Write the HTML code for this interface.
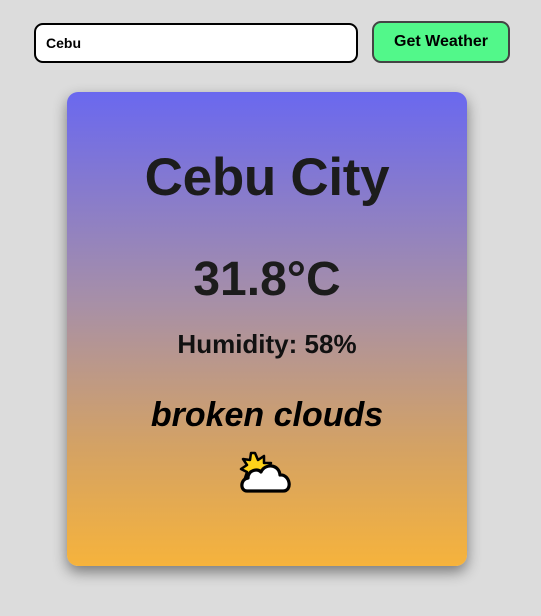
<!DOCTYPE html><html><head><style>
body{margin:0;background:#dcdcdc;width:541px;height:616px;position:relative;font-family:"Liberation Sans",sans-serif;overflow:hidden}
.in{position:absolute;left:34px;top:23px;height:36px;border:2px solid #000;border-radius:9px;background:#fff;font-weight:bold;font-size:14px;line-height:36px;padding-left:10px;width:310px}
.bt{position:absolute;left:372px;top:21px;width:134px;height:38px;border:2px solid #444;border-radius:9px;background:#52f88a;font-weight:bold;font-size:16px;text-align:center;line-height:38px}
.card{position:absolute;left:67px;top:92px;width:400px;height:474px;border-radius:11px;background:linear-gradient(#6a68ef,#a890a6 45%,#d4a264 75%,#f6b33c);box-shadow:0 6px 14px rgba(0,0,0,.45);text-align:center;color:#1c1c1c;font-weight:bold}
.t{position:absolute;left:0;right:0}
</style></head><body>
<div class="in">Cebu</div>
<div class="bt">Get Weather</div>
<div class="card">
<div class="t" style="top:55px;font-size:53px;letter-spacing:-0.3px">Cebu City</div>
<div class="t" style="top:160px;font-size:48px">31.8°C</div>
<div class="t" style="top:237px;font-size:26px;color:#111">Humidity: 58%</div>
<div class="t" style="top:304px;font-size:34px;font-style:italic;color:#000">broken clouds</div>
<svg class="t" style="top:359px;left:172px" width="58" height="44" viewBox="0 0 58 44">
<polygon points="16,2 19,9 25,5 25,12 32,12 28,18 33,23 14,29 6,27 8,21 2,18 8,14 4,8 11,9 12,2" fill="#ffd21a" stroke="#000" stroke-width="2.5" stroke-linejoin="round"/>
<path d="M8,40 C1,40 1,28 9,27 C9,19 19,17 22,21 C26,12 40,13 41,24 C51,23 54,40 44,40 Z" fill="#fff" stroke="#000" stroke-width="3.2" stroke-linejoin="round"/>
</svg>
</div>
</body></html>
